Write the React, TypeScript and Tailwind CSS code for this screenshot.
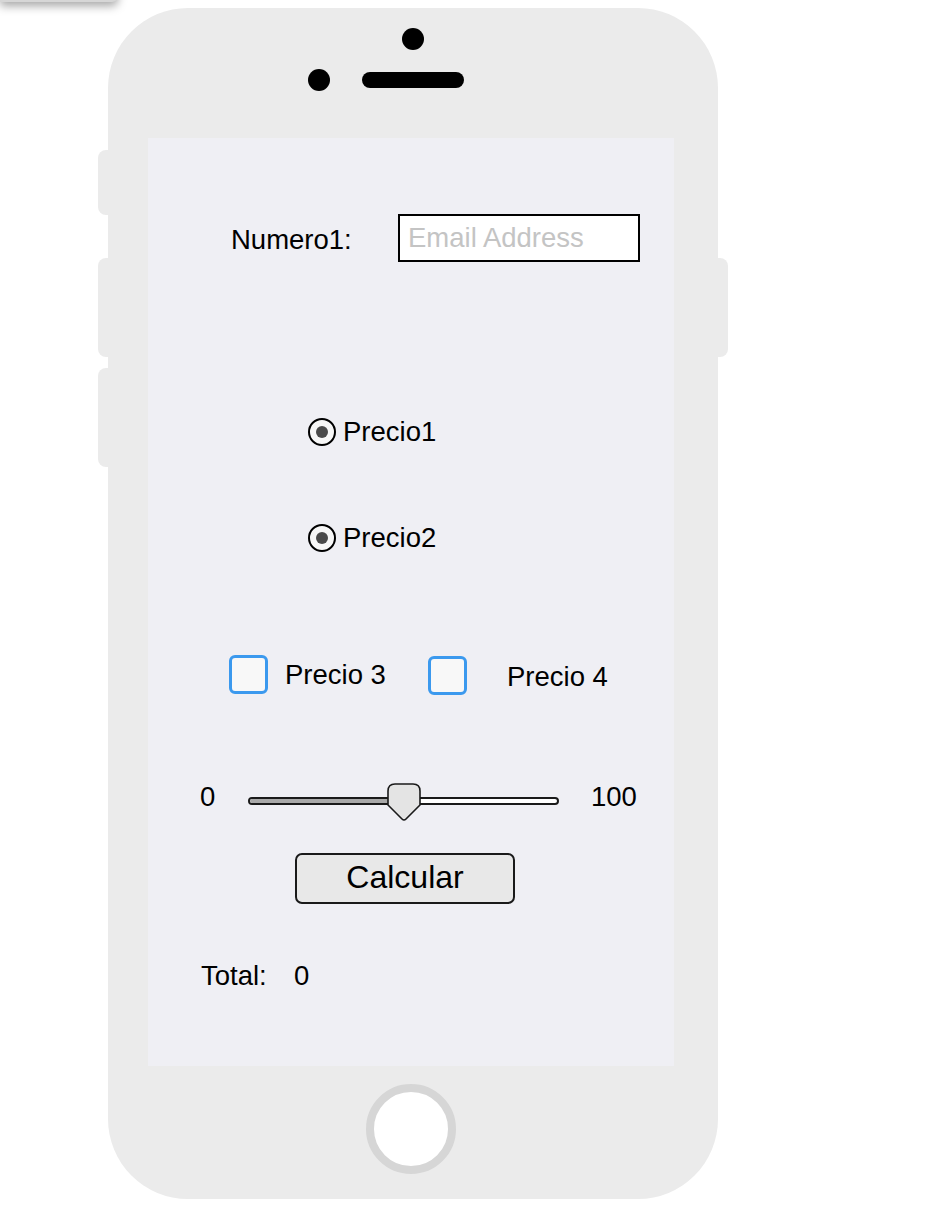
import React, { useState } from 'react';

const font = { fontFamily: '"Liberation Sans", Arial, Helvetica, sans-serif' };

function Radio({ label, checked }: { label: string; checked: boolean }) {
  return (
    <div className="flex items-center gap-[7px]">
      <div className="w-[28px] h-[28px] rounded-full border-2 border-black bg-[#f7f7f7] flex items-center justify-center">
        {checked && <div className="w-[12px] h-[12px] rounded-full bg-[#4a4a4a]" />}
      </div>
      <span className="text-[27.5px] leading-none text-black">{label}</span>
    </div>
  );
}

function Check({ checked, onToggle }: { checked: boolean; onToggle: () => void }) {
  return (
    <button
      onClick={onToggle}
      className="w-[39px] h-[39px] rounded-[6px] border-[3px] border-[#3b99ee] bg-[#f8f8f8] shrink-0"
    >
      {checked && <span className="text-[#3b99ee] text-[22px] leading-none">✓</span>}
    </button>
  );
}

function Slider({ value }: { value: number }) {
  const pct = value / 100;
  return (
    <div className="relative w-[311px] h-[38px]">
      <div className="absolute left-0 right-0 top-[14px] h-[8px] rounded-full border-2 border-[#1a1a1a] bg-white overflow-hidden">
        <div className="h-full bg-[#a9a9a9]" style={{ width: `${pct * 100}%` }} />
      </div>
      <svg
        className="absolute top-0"
        style={{ left: `${pct * 311 - 17}px` }}
        width="34"
        height="38"
        viewBox="0 0 34 38"
      >
        <path
          d="M8 1 H26 Q33 1 33 8 V22 L19 36 Q17 38 15 36 L1 22 V8 Q1 1 8 1 Z"
          fill="#e4e4e4"
          stroke="#1a1a1a"
          strokeWidth="1.6"
        />
      </svg>
    </div>
  );
}

export default function App() {
  const [c3, setC3] = useState(false);
  const [c4, setC4] = useState(false);

  return (
    <div className="relative w-[930px] h-[1230px] overflow-hidden bg-white" style={font}>
      <div className="absolute left-0 top-[-28px] w-[118px] h-[30px] bg-[#d6d6d6] rounded-br-[6px] shadow-[0_4px_10px_rgba(0,0,0,0.35)]" />

      <div className="relative ml-[108px] pt-[8px]">
        <div className="relative w-[610px] h-[1191px] rounded-[80px] bg-[#ebebeb] flex flex-col">
          {/* side buttons */}
          <div className="absolute left-[-10px] top-[142px] w-[12px] h-[65px] rounded-l-[8px] bg-[#ebebeb]" />
          <div className="absolute left-[-10px] top-[250px] w-[12px] h-[99px] rounded-l-[8px] bg-[#ebebeb]" />
          <div className="absolute left-[-10px] top-[360px] w-[12px] h-[99px] rounded-l-[8px] bg-[#ebebeb]" />
          <div className="absolute right-[-10px] top-[250px] w-[12px] h-[99px] rounded-r-[8px] bg-[#ebebeb]" />

          {/* top: camera + speaker */}
          <div className="h-[130px] flex flex-col items-center pt-[20px]">
            <div className="w-[22px] h-[22px] rounded-full bg-black" />
            <div className="relative mt-[22px] w-[102px] h-[16px] rounded-full bg-black">
              <div className="absolute left-[-54px] top-[-3px] w-[22px] h-[22px] rounded-full bg-black" />
            </div>
          </div>

          {/* screen */}
          <div className="ml-[40px] w-[526px] h-[928px] bg-[#efeff4] flex flex-col text-black">
            <div className="mt-[76px] flex items-center pl-[83px]">
              <span className="w-[167px] text-[27.5px] leading-none pt-[4px]">Numero1:</span>
              <input
                placeholder="Email Address"
                className="w-[242px] h-[48px] border-2 border-black bg-white px-[8px] text-[27.5px] outline-none placeholder:text-[#c4c4c4]"
              />
            </div>

            <div className="mt-[156px] pl-[160px]">
              <Radio label="Precio1" checked />
            </div>
            <div className="mt-[78px] pl-[160px]">
              <Radio label="Precio2" checked />
            </div>

            <div className="mt-[103px] pl-[81px] flex items-start">
              <div className="w-[199px] flex items-center">
                <Check checked={c3} onToggle={() => setC3(!c3)} />
                <span className="ml-[17px] text-[27.5px] leading-none">Precio 3</span>
              </div>
              <div className="mt-[1px] flex items-center">
                <Check checked={c4} onToggle={() => setC4(!c4)} />
                <span className="ml-[40px] text-[27.5px] leading-none pt-[3px]">Precio 4</span>
              </div>
            </div>

            <div className="mt-[88px] pl-[52px] flex items-center">
              <span className="w-[48px] text-[27.5px] leading-none mb-[10px]">0</span>
              <Slider value={50} />
              <span className="ml-[32px] text-[27.5px] leading-none mb-[10px]">100</span>
            </div>

            <button className="mt-[32px] ml-[147px] w-[220px] h-[51px] rounded-[7px] border-2 border-[#1a1a1a] bg-[#e8e8e8] text-[32px] leading-none pb-[4px]">
              Calcular
            </button>

            <div className="mt-[58px] pl-[53px] flex items-center text-[27.5px] leading-none">
              <span className="w-[93px]">Total:</span>
              <span>0</span>
            </div>
          </div>

          {/* home button */}
          <div className="mt-[18px] ml-[258px] w-[90px] h-[90px] rounded-full border-[8px] border-[#d6d6d6] bg-white" />
        </div>
      </div>
    </div>
  );
}
